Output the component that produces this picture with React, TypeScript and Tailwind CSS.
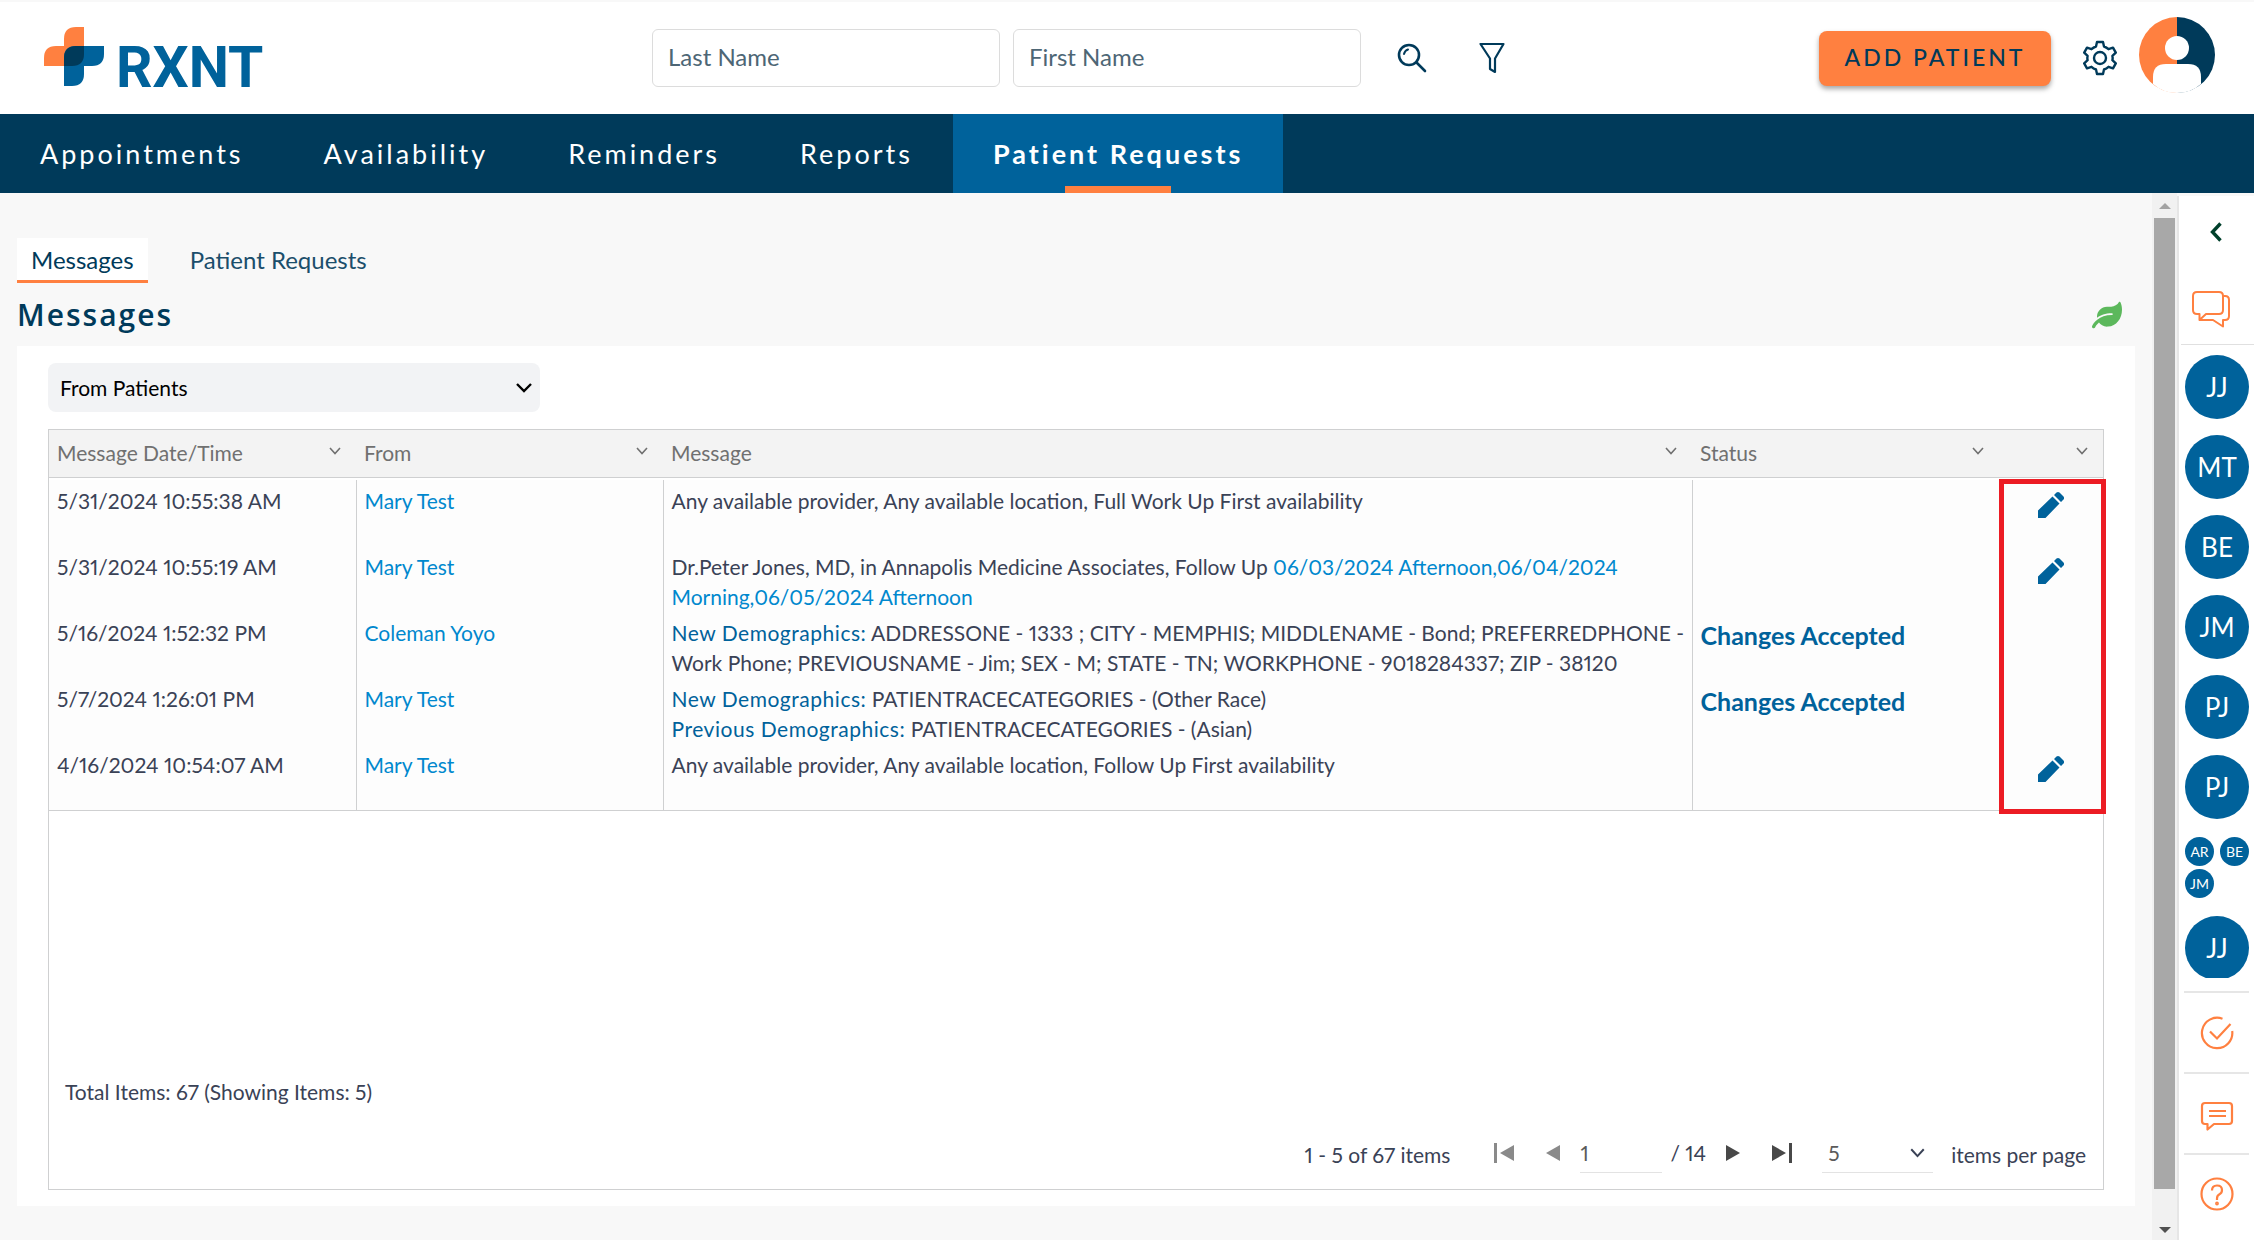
import { useState } from 'react';
import type { ReactNode } from 'react';
import { FaLeaf } from 'react-icons/fa';

const NAV_ITEMS = ['Appointments', 'Availability', 'Reminders', 'Reports', 'Patient Requests'];

const TABS = ['Messages', 'Patient Requests'];

const CONTACTS = ['JJ', 'MT', 'BE', 'JM', 'PJ', 'PJ'];

const GROUP = ['AR', 'BE', 'JM'];

const COLUMNS = [
  { id: 'date', label: 'Message Date/Time', width: 'w-[307px]' },
  { id: 'from', label: 'From', width: 'w-[307px]' },
  { id: 'message', label: 'Message', width: '' },
  { id: 'status', label: 'Status', width: 'w-[307px]' },
  { id: 'edit', label: '', width: 'w-[104px]' }
];

interface MessageRow {
  date: string;
  from: string;
  message: ReactNode;
  status?: string;
  editable?: boolean;
}

const MESSAGES: MessageRow[] = [
  {
    date: '5/31/2024 10:55:38 AM',
    from: 'Mary Test',
    message: 'Any available provider, Any available location, Full Work Up First availability',
    editable: true
  },
  {
    date: '5/31/2024 10:55:19 AM',
    from: 'Mary Test',
    message: (
      <>
        Dr.Peter Jones, MD, in Annapolis Medicine Associates, Follow Up{' '}
        <span className="text-[#0088ce]">
          06/03/2024 Afternoon,06/04/2024
          <br />
          Morning,06/05/2024 Afternoon
        </span>
      </>
    ),
    editable: true
  },
  {
    date: '5/16/2024 1:52:32 PM',
    from: 'Coleman Yoyo',
    message: (
      <>
        <FieldName>New Demographics:</FieldName> ADDRESSONE - 1333 ; CITY - MEMPHIS; MIDDLENAME - Bond; PREFERREDPHONE -
        <br />
        Work Phone; PREVIOUSNAME - Jim; SEX - M; STATE - TN; WORKPHONE - 9018284337; ZIP - 38120
      </>
    ),
    status: 'Changes Accepted'
  },
  {
    date: '5/7/2024 1:26:01 PM',
    from: 'Mary Test',
    message: (
      <>
        <FieldName>New Demographics:</FieldName> PATIENTRACECATEGORIES - (Other Race)
        <br />
        <FieldName>Previous Demographics:</FieldName> PATIENTRACECATEGORIES - (Asian)
      </>
    ),
    status: 'Changes Accepted'
  },
  {
    date: '4/16/2024 10:54:07 AM',
    from: 'Mary Test',
    message: 'Any available provider, Any available location, Follow Up First availability',
    editable: true
  }
];

function FieldName({ children }: { children: ReactNode }) {
  return <span className="tracking-wide text-[#00629b]">{children}</span>;
}

function Chevron({ className }: { className: string }) {
  return (
    <svg viewBox="0 0 12 8" fill="none" stroke="currentColor" strokeWidth="1.6" className={className}>
      <path d="M1 1l5 5.5L11 1" />
    </svg>
  );
}

function Logo() {
  return (
    <a href="#home" aria-label="RXNT" className="flex items-start gap-3 pt-[6px]">
      <svg viewBox="0 0 60 59" className="h-[59px] w-[60px]">
        <path d="M20 19V12Q20 0 32 0h8v39H0V31Q0 19 12 19z" fill="#ff8040" />
        <path d="M32 19h28v8q0 12-12 12h-8v8q0 12-12 12h-8V31q0-12 12-12z" fill="#00629b" />
        <path d="M32 19h8v8q0 12-12 12h-8v-8q0-12 12-12z" fill="#003a5a" />
      </svg>
      <span className="pt-[13px] font-[Roboto] text-[57px]/[56px] font-bold text-[#00629b]">RXNT</span>
    </a>
  );
}

function Header() {
  return (
    <header className="flex h-[114px] items-center border-t-2 border-[#f8f8f8] bg-white pr-[39px] pl-11">
      <div className="w-[608px]">
        <Logo />
      </div>
      <form className="flex flex-1 items-center" onSubmit={(e) => e.preventDefault()}>
        <input
          aria-label="Last Name"
          placeholder="Last Name"
          className="h-[58px] w-[348px] rounded-md border border-[#dcdcdc] px-[15px] pb-1 text-2xl placeholder:text-[#4d6675]"
        />
        <input
          aria-label="First Name"
          placeholder="First Name"
          className="ml-[13px] h-[58px] w-[348px] rounded-md border border-[#dcdcdc] px-[15px] pb-1 text-2xl placeholder:text-[#4d6675]"
        />
        <button type="submit" aria-label="Search" className="ml-9 text-[#003a5a]">
          <svg viewBox="0 0 30 30" fill="none" stroke="currentColor" strokeLinecap="round" className="size-[30px]">
            <circle cx="12" cy="12" r="10" strokeWidth="2.6" />
            <path d="M19.500 19.500L28 28" strokeWidth="2.6" />
            <path d="M7 11q.8-3.500 4-4.500" strokeWidth="2" />
          </svg>
        </button>
        <button type="button" aria-label="Filter" className="ml-[52px] text-[#003a5a]">
          <svg viewBox="0 0 26 32" fill="none" stroke="currentColor" strokeWidth="2.2" strokeLinejoin="round" className="h-8 w-[26px]">
            <path d="M1.500 2h23L16 16.500V30l-5-3V16.500z" />
          </svg>
        </button>
      </form>
      <button
        type="button"
        className="h-[55px] w-[232px] rounded-lg bg-[#ff8040] pb-[2px] text-[23px] font-medium tracking-[3px] text-[#003a5a] shadow-[0_3px_5px_rgba(0,0,0,0.35)]"
      >
        ADD PATIENT
      </button>
      <button type="button" aria-label="Settings" className="ml-8 text-[#003a5a]">
        <svg viewBox="0 0 34 36" fill="none" stroke="currentColor" strokeWidth="2.4" strokeLinejoin="round" className="h-9 w-[34px]">
          <path d="M14 2h6l1 4.500q2.500.800 4.500 2.700l4.500-1.500 2.800 5-3.400 3.200q.5 2.100 0 4.200l3.400 3.200-2.800 5-4.500-1.500q-2 1.900-4.500 2.700L20 34h-6l-1-4.500q-2.500-.8-4.500-2.700L4 28.300l-2.800-5 3.400-3.200q-.5-2.100 0-4.200L1.200 12.700l2.800-5 4.500 1.500q2-1.900 4.500-2.700z" />
          <circle cx="17" cy="18" r="6" />
        </svg>
      </button>
      <button type="button" aria-label="Account" className="ml-[22px] self-start pt-[15px]">
        <svg viewBox="0 0 76 76" className="size-[76px]">
          <path d="M38 0a38 38 0 0 0 0 76z" fill="#ff8040" />
          <path d="M38 0a38 38 0 0 1 0 76z" fill="#003a5a" />
          <circle cx="38" cy="31" r="12" fill="#fff" />
          <path d="M14 67V60q0-13 13-13h22q13 0 13 13v7q-10 9-24 9t-24-9z" fill="#fff" />
        </svg>
      </button>
    </header>
  );
}

function NavBar() {
  return (
    <nav className="flex h-[79px] bg-[#003a5a] text-[27px] tracking-[3px] text-white">
      {NAV_ITEMS.map((item) =>
        item === 'Patient Requests' ? (
          <a key={item} href="#requests" aria-current="page" className="flex flex-col items-center bg-[#00629b] px-10 font-bold">
            <span className="flex flex-1 items-center pt-2">{item}</span>
            <span className="h-[7px] w-[106px] bg-[#ff8040]" />
          </a>
        ) : (
          <a key={item} href={`#${item.toLowerCase()}`} className="flex items-center px-10 pt-px">
            {item}
          </a>
        )
      )}
    </nav>
  );
}

function MessageTable() {
  return (
    <div className="relative">
      <table className="w-full table-fixed border-collapse text-left">
        <thead>
          <tr className="h-[47px] border-b border-[#cfd0d1] bg-[#f3f3f3] text-[#707070]">
            {COLUMNS.map((column) => (
              <th key={column.id} className={`${column.width} pr-[15px] pl-2 font-normal`}>
                <span className="flex items-center justify-between">
                  {column.label}
                  <button type="button" aria-label={`${column.label} column menu`} className="ml-auto pb-1">
                    <Chevron className="h-2 w-3" />
                  </button>
                </span>
              </th>
            ))}
          </tr>
        </thead>
        <tbody className="border-b border-[#cfd0d1] bg-[#fdfdfd]">
          <tr aria-hidden="true" className="h-[3px] bg-white">
            <td colSpan={5} />
          </tr>
          {MESSAGES.map((row) => (
            <tr key={row.date} className="h-[66px] align-top">
              <td className="border-r border-[#cfd0d1] pt-[6px] pl-2">{row.date}</td>
              <td className="border-r border-[#cfd0d1] pt-[6px] pl-2">
                <a href="#patient" className="text-[#0088ce]">{row.from}</a>
              </td>
              <td className="border-r border-[#cfd0d1] pt-[6px] pl-2 whitespace-nowrap">{row.message}</td>
              <td className="border-r border-[#cfd0d1] pt-2 pl-2 text-[25px]/[30px] font-bold text-[#00629b]">{row.status}</td>
              <td className="pt-3 text-center leading-none">
                {row.editable && (
                  <button type="button" aria-label="Edit" className="text-[#00629b]">
                    <svg viewBox="0 0 26 26" fill="currentColor" className="size-[26px]">
                      <path d="M0 26v-7.500L14.500 4.500l7 7L7.500 26zM16 3l2.500-2.400q1.500-1.200 3 0l4 4q1.200 1.500 0 3L23 10z" />
                    </svg>
                  </button>
                )}
              </td>
            </tr>
          ))}
        </tbody>
      </table>
      {/* Edit column highlight */}
      <div className="absolute top-[49px] -right-[3px] -bottom-[3px] w-[107px] border-[5px] border-[#ec1c24]" />
    </div>
  );
}

function Pager() {
  const [page, setPage] = useState(1);

  return (
    <div className="flex items-center pr-[17px] pb-4">
      <span className="pt-1">1 - 5 of 67 items</span>
      <button type="button" aria-label="First page" onClick={() => setPage(1)} className="ml-11 text-[#8a8a8a]">
        <svg viewBox="0 0 20 20" fill="currentColor" className="size-5">
          <path d="M0 0h3v20H0zM20 2v16L6 10z" />
        </svg>
      </button>
      <button type="button" aria-label="Previous page" onClick={() => setPage(Math.max(1, page - 1))} className="ml-8 text-[#8a8a8a]">
        <svg viewBox="0 0 14 20" fill="currentColor" className="h-5 w-[14px]">
          <path d="M14 2v16L0 10z" />
        </svg>
      </button>
      <input
        aria-label="Page"
        value={page}
        onChange={(e) => setPage(Number(e.target.value) || 1)}
        className="ml-5 h-10 w-[82px] border-b border-[#e3e3e3] text-[#5b5b5b]"
      />
      <span className="ml-2">/ 14</span>
      <button type="button" aria-label="Next page" onClick={() => setPage(Math.min(14, page + 1))} className="ml-5 text-[#484848]">
        <svg viewBox="0 0 14 20" fill="currentColor" className="h-5 w-[14px]">
          <path d="M0 2v16L14 10z" />
        </svg>
      </button>
      <button type="button" aria-label="Last page" onClick={() => setPage(14)} className="ml-8 text-[#484848]">
        <svg viewBox="0 0 20 20" fill="currentColor" className="size-5">
          <path d="M17 0h3v20h-3zM0 2v16L14 10z" />
        </svg>
      </button>
      <div className="ml-[30px] grid items-center">
        <select
          aria-label="Page size"
          defaultValue="5"
          className="col-start-1 row-start-1 h-10 w-[111px] appearance-none border-b border-[#e3e3e3] pl-[6px] text-[#5b5b5b]"
        >
          <option>5</option>
          <option>10</option>
          <option>20</option>
        </select>
        <Chevron className="pointer-events-none col-start-1 row-start-1 mr-2 h-[10px] w-[15px] justify-self-end" />
      </div>
      <span className="ml-[18px] pt-1">items per page</span>
    </div>
  );
}

function MessagesPage() {
  const [tab, setTab] = useState('Messages');

  return (
    <main className="flex min-w-0 flex-1 flex-col pr-[17px] pb-[34px] pl-[17px]">
      <div className="mt-[45px] flex gap-7 text-2xl text-[#1b4e6b]">
        {TABS.map((name) => (
          <button
            key={name}
            type="button"
            onClick={() => setTab(name)}
            className={
              name === tab
                ? 'h-[45px] border-b-[3px] border-[#ff8040] bg-white px-[14px] pt-[2px] text-[#003a5a]'
                : 'h-[45px] border-b-[3px] border-transparent px-[14px] pt-[2px]'
            }
          >
            {name}
          </button>
        ))}
      </div>

      <div className="flex h-[63px] items-center justify-between pr-[13px]">
        <h1 className="font-['Open_Sans'] text-[30px] font-semibold tracking-[2px] text-[#003a5a]">Messages</h1>
        <FaLeaf className="size-[30px] text-[#5cb85c]" />
      </div>

      <section className="flex flex-1 flex-col bg-white px-[31px] pt-[17px] pb-4 text-[21px]/[30px] text-[#3a4256] proportional-nums">
        <div className="grid w-[492px] items-center">
          <select
            aria-label="Message source"
            className="col-start-1 row-start-1 h-[49px] appearance-none rounded-lg bg-[#f2f3f5] pl-3 text-black"
          >
            <option>From Patients</option>
            <option>To Patients</option>
          </select>
          <svg
            viewBox="0 0 16 10"
            fill="none"
            stroke="black"
            strokeWidth="2.4"
            className="pointer-events-none col-start-1 row-start-1 mr-2 h-[10px] w-4 justify-self-end"
          >
            <path d="M1 1l7 7 7-7" />
          </svg>
        </div>

        <div className="mt-[17px] flex flex-1 flex-col border border-[#cfd0d1]">
          <MessageTable />
          <div className="mt-auto flex flex-col">
            <p className="pb-[26px] pl-4">Total Items: 67 (Showing Items: 5)</p>
            <div className="self-end">
              <Pager />
            </div>
          </div>
        </div>
      </section>
    </main>
  );
}

function ScrollTrack() {
  return (
    <div className="flex w-[25px] flex-col items-center bg-[#f1f1f1]">
      <svg viewBox="0 0 12 6" className="mt-[10px] h-[6px] w-3" fill="#a3a3a3">
        <path d="M0 6l6-6 6 6z" />
      </svg>
      <div className="mt-[9px] mb-[38px] w-[21px] flex-1 bg-[#a8a8a8]" />
      <svg viewBox="0 0 12 6" className="mb-[7px] h-[6px] w-3" fill="#505050">
        <path d="M0 0l6 6 6-6z" />
      </svg>
    </div>
  );
}

function Avatar({ initials }: { initials: string }) {
  return (
    <button type="button" className="size-16 shrink-0 rounded-full bg-[#00629b] text-[26px] text-white">
      {initials}
    </button>
  );
}

function ChatSidebar() {
  return (
    <aside className="mt-[3px] flex w-[77px] flex-col border-l-2 border-[#e6e6e6] bg-white">
      <button type="button" aria-label="Expand" className="mt-[26px] ml-[31px] self-start text-[#00402b]">
        <svg viewBox="0 0 12 20" fill="none" stroke="currentColor" strokeWidth="3.4" className="h-5 w-3">
          <path d="M10.500 1.500L2.500 10l8 8.500" />
        </svg>
      </button>
      <button type="button" aria-label="Chats" className="mt-[49px] ml-[13px] self-start">
        <svg viewBox="0 0 38 37" fill="none" stroke="#ff8040" strokeWidth="2" strokeLinejoin="round" className="h-[37px] w-[38px]">
          <path d="M5 1h22q4 0 4 4v14q0 4-4 4H14l-6.500 6V23H5q-4 0-4-4V5q0-4 4-4z" />
          <path d="M31 5h2q4 0 4 4v16q0 4-4 4h-2v6.500L21 29H7.500" />
        </svg>
      </button>
      <div className="mt-4 ml-[2px] border-t border-[#e0e0e0]" />
      <div className="flex min-h-0 flex-1 basis-0 flex-col gap-4 overflow-hidden pt-[10px] pl-[6px]">
        {CONTACTS.map((initials, index) => (
          <Avatar key={index} initials={initials} />
        ))}
        <div className="my-[2px] flex w-16 shrink-0 flex-wrap gap-x-[6px] gap-y-[3px]">
          {GROUP.map((initials) => (
            <span key={initials} className="flex size-[29px] items-center justify-center rounded-full bg-[#00629b] text-sm text-white">
              {initials}
            </span>
          ))}
        </div>
        <Avatar initials="JJ" />
      </div>
      <div className="mt-[13px] mr-[5px] ml-[5px] text-[#ff8040]">
        <button type="button" aria-label="Tasks" className="flex h-[81px] w-full items-center justify-center border-t-2 border-[#e6e6e6]">
          <svg viewBox="0 0 34 34" fill="none" stroke="currentColor" strokeWidth="2.200" className="size-[34px]">
            <path d="M22.500 2.700A15.200 15.200 0 1 0 32.200 15" />
            <path d="M10 15.500l7 7L30.500 8" />
          </svg>
        </button>
        <button type="button" aria-label="Notes" className="flex h-[81px] w-full items-center justify-center border-t-2 border-[#e6e6e6] pt-1">
          <svg viewBox="0 0 34 30" fill="none" stroke="currentColor" strokeWidth="2.200" strokeLinejoin="round" className="h-[30px] w-[34px]">
            <path d="M5 2h24q3 0 3 3v15q0 3-3 3H14l-6.500 5.500V23H5q-3 0-3-3V5q0-3 3-3zM9 10h17M9 15h17" />
          </svg>
        </button>
        <button type="button" aria-label="Help" className="flex h-[87px] w-full items-start justify-center border-t-2 border-[#e6e6e6] pt-[22px]">
          <svg viewBox="0 0 34 34" fill="none" stroke="currentColor" strokeWidth="2.200" className="size-[34px]">
            <circle cx="17" cy="17" r="15.500" />
            <path d="M12 13.500q0-5 5-5t5 4.500q0 3-2.500 4.300T17 21.500V23" />
            <circle cx="17" cy="26.500" r="0.800" />
          </svg>
        </button>
      </div>
    </aside>
  );
}

export default function App() {
  return (
    <div className="flex min-h-screen flex-col bg-[#f8f8f8] font-['Lato','Open_Sans',sans-serif]">
      <Header />
      <NavBar />
      <div className="flex flex-1">
        <MessagesPage />
        <ScrollTrack />
        <ChatSidebar />
      </div>
    </div>
  );
}
